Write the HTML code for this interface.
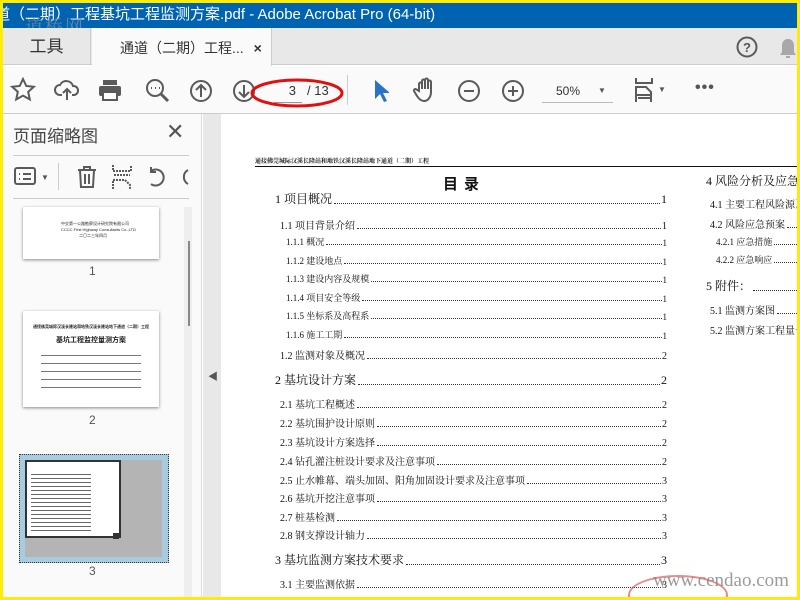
<!DOCTYPE html>
<html><head><meta charset="utf-8"><style>
*{margin:0;padding:0;box-sizing:border-box}
body{width:800px;height:600px;overflow:hidden;background:#ffec00;position:relative;font-family:"Liberation Sans","Noto Sans CJK SC",sans-serif}
.a{position:absolute}
.toc{position:absolute;display:flex;align-items:flex-end;font-family:"Liberation Serif","Noto Serif CJK SC",serif;color:#111;white-space:nowrap}
.toc .d{flex:1;border-bottom:1px dotted #333;margin:0 1px 3px 2px}
.ic{position:absolute;stroke:#5a5a5a;fill:none;stroke-width:2}
</style></head><body>
<div class="a" style="left:3px;top:3px;width:794px;height:594px;background:#fff;overflow:hidden">
<div class="a" style="left:-8px;top:0;width:810px;height:25px;background:#0063b1;color:#fff;font-size:15px;line-height:24px;white-space:nowrap">道（二期）工程基坑工程监测方案.pdf - Adobe Acrobat Pro (64-bit)</div>
<div class="a" style="left:22px;top:10px;color:rgba(120,140,170,.8);font-size:18px;font-family:'Noto Serif CJK SC',serif;letter-spacing:2px">道桥网</div>
<div class="a" style="left:0;top:25px;width:794px;height:37px;background:#e8e8e8;border-bottom:1px solid #ccc"></div>
<div class="a" style="left:0;top:25px;width:88px;height:37px;border-right:1px solid #ccc;font-size:17px;color:#333;text-align:center;line-height:37px">工具</div>
<div class="a" style="left:89px;top:25px;width:180px;height:38px;background:#fafafa;border-right:1px solid #ccc;font-size:14px;color:#333;line-height:40px;padding-left:28px">通道（二期）工程... <span style="margin-left:6px;font-weight:bold">×</span></div>
<svg class="ic" style="left:733px;top:33px" width="22" height="22"><circle cx="11" cy="11" r="9.5"/><text x="11" y="16" font-size="13" text-anchor="middle" fill="#555" stroke="none" font-weight="bold">?</text></svg>
<svg class="a" style="left:776px;top:34px" width="18" height="22"><path d="M9 2c-4 0-6 3-6 7v6l-2 3h16l-2-3V9c0-4-2-7-6-7z M7 19h4v2H7z" fill="#a8a8a8"/></svg>
<div class="a" style="left:0;top:63px;width:794px;height:48px;background:#fafafa;border-bottom:1px solid #ccc"></div>
<svg class="ic" style="left:7px;top:74px" width="26" height="26"><path d="M13 2l3.3 7 7.5.8-5.6 5.1 1.6 7.5L13 18.6l-6.8 3.8 1.6-7.5L2.2 9.8 9.7 9z"/></svg>
<svg class="ic" style="left:51px;top:75px" width="26" height="24"><path d="M8 17H6a5 5 0 010-10 7 7 0 0113 1 4.5 4.5 0 011 9h-2M13 22V11M9 15l4-4 4 4"/></svg>
<svg class="a" style="left:95px;top:76px" width="24" height="22"><rect x="5" y="1" width="14" height="5" fill="#5a5a5a"/><rect x="1" y="7" width="22" height="10" rx="2" fill="#5a5a5a"/><rect x="5" y="13" width="14" height="8" fill="#fff" stroke="#5a5a5a" stroke-width="2"/></svg>
<svg class="ic" style="left:142px;top:75px" width="26" height="26"><circle cx="10" cy="10" r="8"/><path d="M16 16l7 7" stroke-width="3"/><path d="M6 10h1M10 10h1M14 10h1" stroke-width="2"/></svg>
<svg class="ic" style="left:186px;top:76px" width="24" height="24"><circle cx="12" cy="12" r="10"/><path d="M12 18V6M7 11l5-5 5 5"/></svg>
<svg class="ic" style="left:229px;top:76px" width="24" height="24"><circle cx="12" cy="12" r="10"/><path d="M12 6v12M7 13l5 5 5-5"/></svg>
<div class="a" style="left:271px;top:78px;width:28px;border-bottom:1px solid #999;height:22px;font-size:13px;color:#333;text-align:right;padding-right:6px;line-height:20px">3</div>
<div class="a" style="left:304px;top:78px;font-size:13px;color:#333;line-height:20px">/ 13</div>
<svg class="a" style="left:246px;top:72px" width="96" height="36"><ellipse cx="48" cy="18" rx="45" ry="13" fill="none" stroke="#e01010" stroke-width="3"/></svg>
<div class="a" style="left:344px;top:72px;width:1px;height:30px;background:#ccc"></div>
<svg class="a" style="left:370px;top:76px" width="16" height="24"><path d="M2 1v19l5-5 4 8 3-1-4-8h7z" fill="#2a72c8"/></svg>
<svg class="ic" style="left:410px;top:74px" width="24" height="26" stroke-width="1.6"><path d="M6 14V7a1.5 1.5 0 013 0v5V4a1.5 1.5 0 013 0v8V3a1.5 1.5 0 013 0v9V5a1.5 1.5 0 013 0v10c0 5-3 9-7 9-3 0-5-2-7-5l-3-5a1.5 1.5 0 012.5-1.5z"/></svg>
<svg class="ic" style="left:454px;top:76px" width="24" height="24"><circle cx="12" cy="12" r="10"/><path d="M7 12h10"/></svg>
<svg class="ic" style="left:498px;top:76px" width="24" height="24"><circle cx="12" cy="12" r="10"/><path d="M7 12h10M12 7v10"/></svg>
<div class="a" style="left:539px;top:78px;width:71px;height:22px;border-bottom:1px solid #bbb;font-size:12px;color:#333;padding-left:14px;line-height:20px">50%<span style="position:absolute;left:56px;top:0;font-size:8px;color:#555">▼</span></div>
<svg class="ic" style="left:631px;top:74px" width="20" height="26" stroke-width="2"><path d="M2 1v5h16V1M2 25V10h10l5 5v10M2 18h15M4 21h12"/></svg>
<div class="a" style="left:655px;top:82px;font-size:8px;color:#555">▼</div>
<div class="a" style="left:692px;top:76px;font-size:16px;color:#555;letter-spacing:1px;font-weight:bold">•••</div>
<div class="a" style="left:0;top:111px;width:199px;height:483px;background:#fafafa;border-right:1px solid #ddd"></div>
<div class="a" style="left:10px;top:119px;font-size:17px;color:#444">页面缩略图</div>
<div class="a" style="left:163px;top:116px;font-size:22px;color:#555">✕</div>
<div class="a" style="left:10px;top:152px;width:176px;height:1px;background:#ccc"></div>
<div class="a" style="left:10px;top:195px;width:176px;height:1px;background:#ccc"></div>
<svg class="ic" style="left:11px;top:163px" width="24" height="20"><rect x="1" y="2" width="20" height="16" rx="2"/><path d="M5 8h1M9 8h8M5 13h1M9 13h8"/></svg>
<div class="a" style="left:38px;top:170px;font-size:8px;color:#555">▼</div>
<div class="a" style="left:55px;top:160px;width:1px;height:27px;background:#ccc"></div>
<svg class="ic" style="left:73px;top:162px" width="22" height="24"><path d="M2 5h18M8 5V2h6v3M4 5l1 17h12l1-17M9 9v10M13 9v10"/></svg>
<svg class="ic" style="left:108px;top:161px" width="22" height="26"><path d="M2 1v6h18V1M2 25v-9h12l5 5v4M3 11h16" stroke-dasharray="2 1"/></svg>
<svg class="ic" style="left:141px;top:162px" width="24" height="24" stroke-width="2.4"><path d="M7 19a8 8 0 100-13M7 2v5h5"/></svg>
<svg class="ic" style="left:174px;top:162px" width="12" height="24" stroke-width="2.4"><path d="M11 5a8 8 0 000 14"/></svg>
<div class="a" style="left:181px;top:204px;width:8px;height:390px;background:#eee"></div>
<div class="a" style="left:185px;top:238px;width:2px;height:85px;background:#888"></div>
<div class="a" style="left:20px;top:204px;width:136px;height:52px;background:#fff;box-shadow:0 1px 3px #888;font-size:4px;color:#222;padding:14px 0 0 38px;line-height:6px">中交第一公路勘察设计研究院有限公司<br>CCCC First Highway Consultants Co.,LTD<br><span style="margin-left:18px">二〇二三年四月</span></div>
<div class="a" style="left:86px;top:261px;font-size:12px;color:#555">1</div>
<div class="a" style="left:20px;top:308px;width:136px;height:96px;background:#fff;box-shadow:0 1px 3px #888;font-size:4px;color:#222;text-align:center;padding-top:13px"><b>通接佛莞城际汉溪长隆站和地铁汉溪长隆站地下通道（二期）工程</b><br><br><b style="font-size:7px">基坑工程监控量测方案</b><div style="height:40px;margin:6px 18px;background:repeating-linear-gradient(#fff 0 4px,#777 4px 5px,#fff 5px 8px)"></div></div>
<div class="a" style="left:86px;top:410px;font-size:12px;color:#555">2</div>
<div class="a" style="left:16px;top:451px;width:150px;height:109px;border:1px dotted #333;background:#a8cbe0"></div>
<div class="a" style="left:22px;top:457px;width:137px;height:97px;background:#b4b4b4"></div>
<div class="a" style="left:22px;top:457px;width:96px;height:78px;background:#fff;border:2px solid #333"></div>
<div class="a" style="left:28px;top:468px;width:60px;height:60px;background:repeating-linear-gradient(#fff 0 3px,#666 3px 4px)"></div>
<div class="a" style="left:110px;top:530px;width:6px;height:6px;background:#333"></div>
<div class="a" style="left:86px;top:561px;font-size:12px;color:#555">3</div>
<div class="a" style="left:200px;top:111px;width:18px;height:483px;background:#e8e8e8"></div>
<div class="a" style="left:205px;top:365px;font-size:10px;color:#555">◀</div>
<div class="a" style="left:218px;top:111px;width:576px;height:483px;background:#fff"></div>
<div class="a" style="left:252px;top:153px;font-size:6px;font-weight:bold;font-family:'Noto Serif CJK SC',serif;color:#111">通接佛莞城际汉溪长隆站和地铁汉溪长隆站地下通道（二期）工程</div>
<div class="a" style="left:252px;top:163px;width:542px;height:1px;background:#111"></div>
<div class="a" style="left:440px;top:170px;font-size:15px;font-weight:bold;letter-spacing:6px;color:#111">目录</div>
<div class="toc" style="left:272px;top:187px;width:392px;font-size:12px">1 项目概况<span class="d"></span>1</div>
<div class="toc" style="left:277px;top:214px;width:387px;font-size:10px">1.1 项目背景介绍<span class="d"></span>1</div>
<div class="toc" style="left:283px;top:232px;width:381px;font-size:9px">1.1.1 概况<span class="d"></span>1</div>
<div class="toc" style="left:283px;top:251px;width:381px;font-size:9px">1.1.2 建设地点<span class="d"></span>1</div>
<div class="toc" style="left:283px;top:269px;width:381px;font-size:9px">1.1.3 建设内容及规模<span class="d"></span>1</div>
<div class="toc" style="left:283px;top:288px;width:381px;font-size:9px">1.1.4 项目安全等级<span class="d"></span>1</div>
<div class="toc" style="left:283px;top:306px;width:381px;font-size:9px">1.1.5 坐标系及高程系<span class="d"></span>1</div>
<div class="toc" style="left:283px;top:325px;width:381px;font-size:9px">1.1.6 施工工期<span class="d"></span>1</div>
<div class="toc" style="left:277px;top:344px;width:387px;font-size:10px">1.2 监测对象及概况<span class="d"></span>2</div>
<div class="toc" style="left:272px;top:368px;width:392px;font-size:12px">2 基坑设计方案<span class="d"></span>2</div>
<div class="toc" style="left:277px;top:393px;width:387px;font-size:10px">2.1 基坑工程概述<span class="d"></span>2</div>
<div class="toc" style="left:277px;top:412px;width:387px;font-size:10px">2.2 基坑围护设计原则<span class="d"></span>2</div>
<div class="toc" style="left:277px;top:431px;width:387px;font-size:10px">2.3 基坑设计方案选择<span class="d"></span>2</div>
<div class="toc" style="left:277px;top:450px;width:387px;font-size:10px">2.4 钻孔灌注桩设计要求及注意事项<span class="d"></span>2</div>
<div class="toc" style="left:277px;top:469px;width:387px;font-size:10px">2.5 止水帷幕、端头加固、阳角加固设计要求及注意事项<span class="d"></span>3</div>
<div class="toc" style="left:277px;top:487px;width:387px;font-size:10px">2.6 基坑开挖注意事项<span class="d"></span>3</div>
<div class="toc" style="left:277px;top:506px;width:387px;font-size:10px">2.7 桩基检测<span class="d"></span>3</div>
<div class="toc" style="left:277px;top:524px;width:387px;font-size:10px">2.8 钢支撑设计轴力<span class="d"></span>3</div>
<div class="toc" style="left:272px;top:548px;width:392px;font-size:12px">3 基坑监测方案技术要求<span class="d"></span>3</div>
<div class="toc" style="left:277px;top:573px;width:387px;font-size:10px">3.1 主要监测依据<span class="d"></span>3</div>
<div class="toc" style="left:703px;top:169px;width:120px;font-size:12px">4 风险分析及应急预案</div>
<div class="toc" style="left:707px;top:193px;width:120px;font-size:10px">4.1 主要工程风险源及</div>
<div class="toc" style="left:707px;top:213px;width:90px;font-size:10px">4.2 风险应急预案<span class="d"></span></div>
<div class="toc" style="left:713px;top:232px;width:84px;font-size:9px">4.2.1 应急措施<span class="d"></span></div>
<div class="toc" style="left:713px;top:250px;width:84px;font-size:9px">4.2.2 应急响应<span class="d"></span></div>
<div class="toc" style="left:703px;top:274px;width:94px;font-size:12px">5 附件：<span class="d"></span></div>
<div class="toc" style="left:707px;top:299px;width:90px;font-size:10px">5.1 监测方案图<span class="d"></span></div>
<div class="toc" style="left:707px;top:319px;width:100px;font-size:10px">5.2 监测方案工程量一</div>
<div class="a" style="left:625px;top:572px;width:100px;height:40px;border:2px solid rgba(220,60,60,.6);border-radius:50%"></div>
<div class="a" style="left:650px;top:567px;font-size:19px;line-height:22px;color:rgba(130,130,130,.8);font-family:'Liberation Serif',serif;white-space:nowrap">www.cendao.com</div>
</div>
</body></html>
